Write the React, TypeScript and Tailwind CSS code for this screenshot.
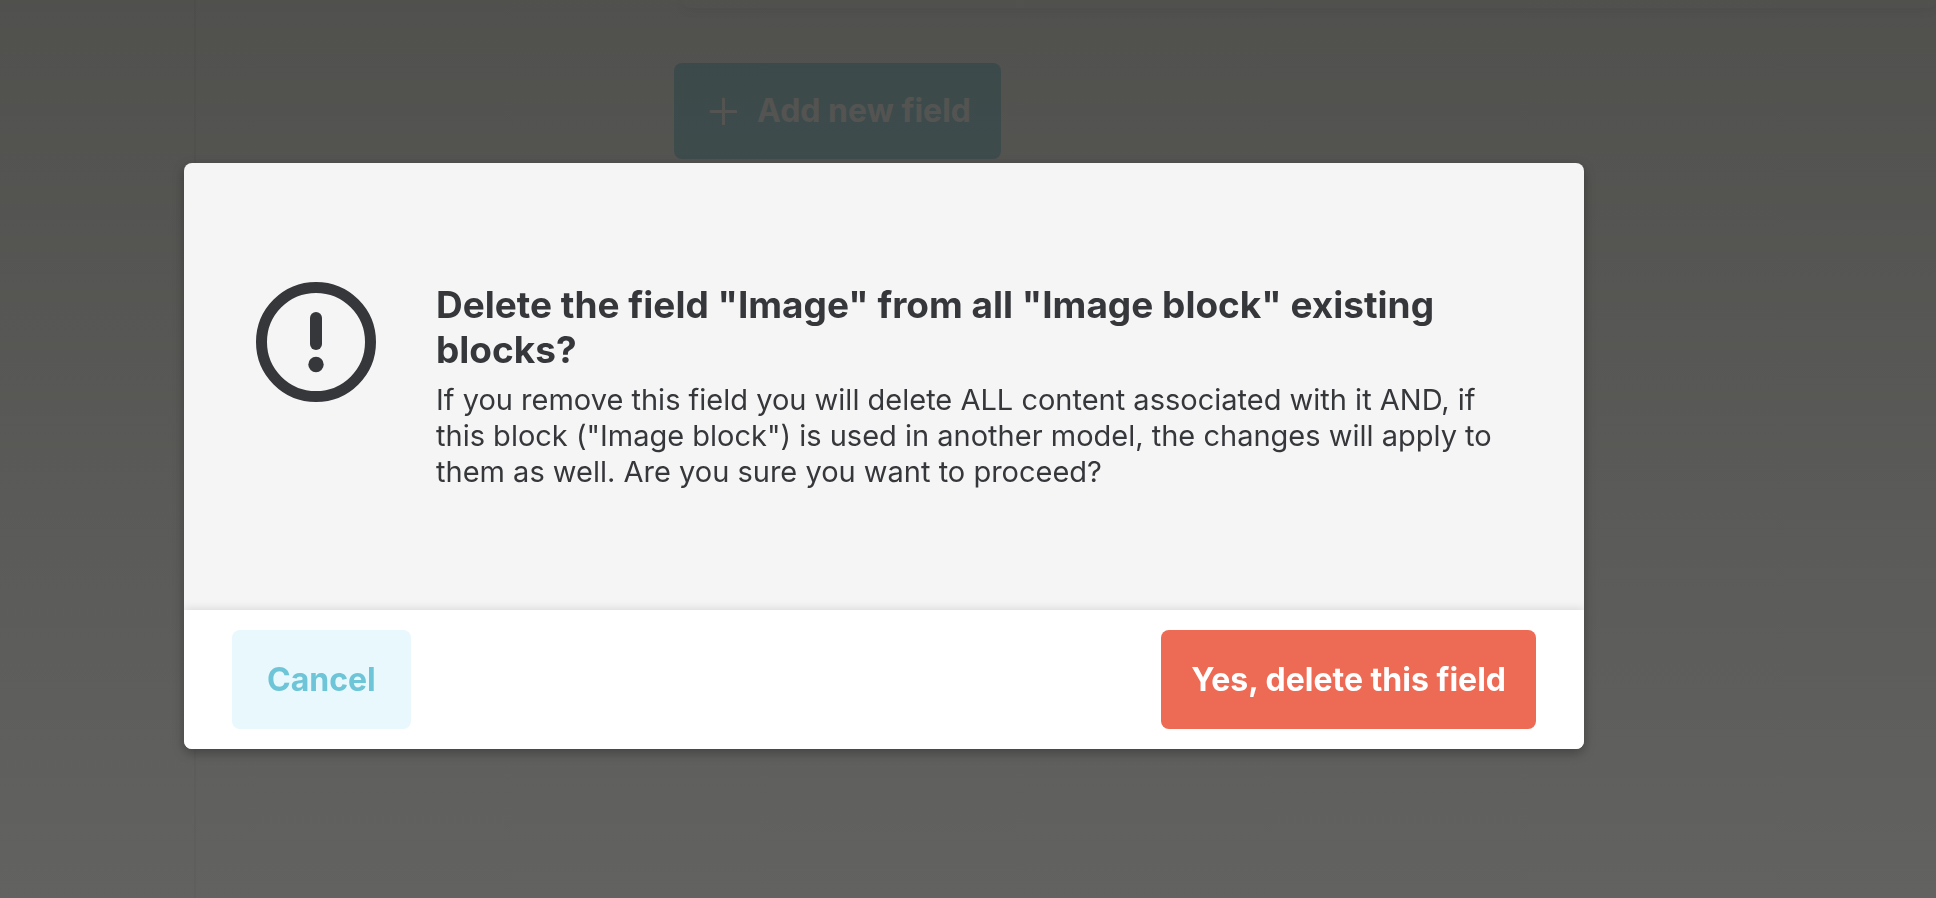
import { useState } from "react";

interface ConfirmDialogProps {
  title: string;
  message: string;
  confirmLabel: string;
  onCancel: () => void;
  onConfirm: () => void;
}

function PlusIcon() {
  return (
    <svg viewBox="0 0 28 28" className="h-7 w-7 shrink-0" aria-hidden="true">
      <path d="M14.5 2v25M2 14.5h25" fill="none" stroke="currentColor" strokeWidth="3" strokeLinecap="round" />
    </svg>
  );
}

function WarningIcon() {
  return (
    <svg viewBox="0 0 120 120" className="h-[120px] w-[120px] shrink-0 text-[#36373b]" aria-hidden="true">
      <circle cx="60" cy="60" r="54.5" fill="none" stroke="currentColor" strokeWidth="11" />
      <rect x="54" y="30" width="12" height="38" rx="6" fill="currentColor" />
      <circle cx="60" cy="82.5" r="7.7" fill="currentColor" />
    </svg>
  );
}

function ConfirmDialog({ title, message, confirmLabel, onCancel, onConfirm }: ConfirmDialogProps) {
  return (
    <div className="fixed inset-0 bg-linear-to-b from-[#30302d]/84 to-[#454543]/84 pl-[184px] pt-[163px]">
      <div
        role="alertdialog"
        aria-modal="true"
        aria-labelledby="dialog-title"
        aria-describedby="dialog-message"
        className="w-full max-w-[1400px] overflow-hidden rounded-lg bg-[#f5f5f5] shadow-[0_4px_12px_rgba(0,0,0,0.3)]"
      >
        <div className="flex items-start gap-[60px] px-[72px] pt-[119px] pb-[120px]">
          <WarningIcon />
          <div className="text-[#36373b]">
            <h2 id="dialog-title" className="mb-[10px] text-[37px] leading-[45px] font-bold">
              {title}
            </h2>
            <p id="dialog-message" className="text-[29px] leading-[36px]">
              {message}
            </p>
          </div>
        </div>
        <div className="flex items-center justify-between bg-white px-12 py-5 shadow-[0_0_10px_rgba(0,0,0,0.15)]">
          <button
            type="button"
            onClick={onCancel}
            className="rounded-lg bg-[#e8f8fc] px-[35px] py-8 text-[32px] leading-[35px] font-bold text-[#6ec5d7]"
          >
            Cancel
          </button>
          <button
            type="button"
            onClick={onConfirm}
            className="rounded-lg bg-[#ed6a54] px-[30px] py-8 text-[32px] leading-[35px] font-bold text-white"
          >
            {confirmLabel}
          </button>
        </div>
      </div>
    </div>
  );
}

export default function App() {
  const [open, setOpen] = useState(true);

  const close = () => setOpen(false);

  return (
    <div className="flex min-h-screen bg-[#f4f4f4] font-[Inter,'Liberation_Sans',sans-serif]">
      <aside className="w-[196px] border-r-2 border-[#e4e4e4]" />
      <main className="flex-1 pl-[478px]">
        {/* bottom edge of the field list */}
        <div className="ml-2 h-2 rounded-b-lg bg-[#f4f4f4] shadow-[0_2px_8px_rgba(0,0,0,0.1)]" />
        <button
          type="button"
          onClick={() => setOpen(true)}
          className="mt-[55px] flex h-24 items-center gap-5 rounded-lg bg-[#6ec5d7] pr-[30px] pl-[35px] text-[32px] font-bold text-white"
        >
          <PlusIcon />
          Add new field
        </button>
      </main>
      {open && (
        <ConfirmDialog
          title={'Delete the field "Image" from all "Image block" existing blocks?'}
          message={
            'If you remove this field you will delete ALL content associated with it AND, if this block ("Image block") is used in another model, the changes will apply to them as well. Are you sure you want to proceed?'
          }
          confirmLabel="Yes, delete this field"
          onCancel={close}
          onConfirm={close}
        />
      )}
    </div>
  );
}
